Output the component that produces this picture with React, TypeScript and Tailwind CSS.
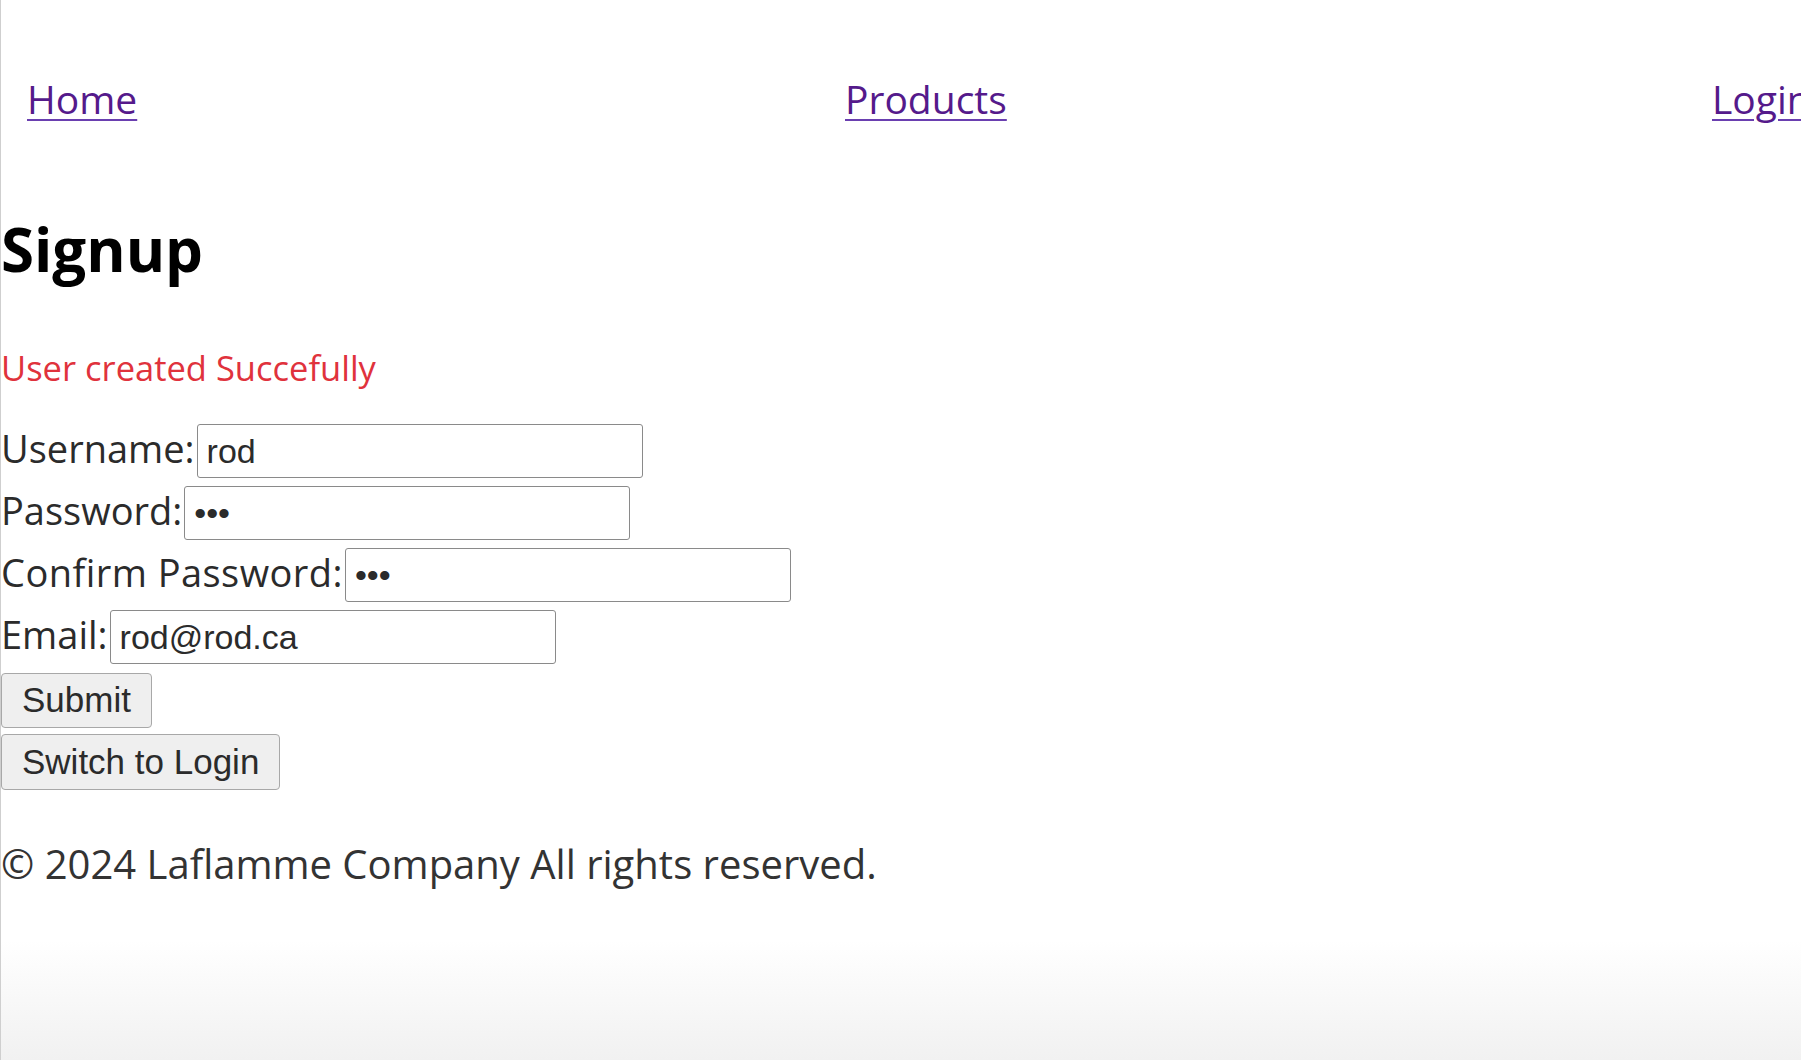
import React from "react";

const fields = [
  { label: "Username:", type: "text", value: "rod", extra: "" },
  { label: "Password:", type: "password", value: "rod", extra: "" },
  { label: "Confirm Password:", type: "password", value: "rod", extra: "tracking-[0.45px]" },
  { label: "Email:", type: "email", value: "rod@rod.ca", extra: "" },
];

export default function App() {
  return (
    <div className="min-h-[1060px] w-full overflow-hidden border-l border-[#cfcfcf] bg-[linear-gradient(to_bottom,#ffffff_940px,#f1f1f1_1060px)] font-['Open_Sans',sans-serif] text-[#2b2b2b]">
      <nav className="grid grid-cols-[818px_867px_1fr] pl-[26px] pt-[76px] text-[39px] leading-[1.2]">
        <a href="#" className="text-[#551a8b] underline decoration-[#6a3fb0] decoration-2 underline-offset-[5px]">
          Home
        </a>
        <a href="#" className="text-[#551a8b] underline decoration-[#6a3fb0] decoration-2 underline-offset-[5px]">
          Products
        </a>
        <a href="#" className="whitespace-nowrap text-[#551a8b] underline decoration-[#6a3fb0] decoration-2 underline-offset-[5px]">
          Login
        </a>
      </nav>

      <h1 className="mt-[90px] text-[60px] font-bold leading-[1.2] text-black">Signup</h1>

      <p className="mt-[62px] text-[34.5px] leading-[1.2] text-[#e0323c]">User created Succefully</p>

      <form className="mt-[36px] flex flex-col gap-2" onSubmit={(e) => e.preventDefault()}>
        {fields.map((f) => (
          <div key={f.label} className="flex items-baseline">
            <label className={`text-[38px] leading-[1.2] text-[#2b2b2b] ${f.extra}`}>{f.label}</label>
            <input
              type={f.type}
              defaultValue={f.value}
              className="ml-[2px] h-[54px] w-[446px] rounded-[3px] border-[1.5px] border-[#8a8a8a] bg-white px-[9px] font-['Liberation_Sans',Arial,sans-serif] text-[34px] text-[#2b2b2b] outline-none"
            />
          </div>
        ))}
        <div className="mt-px flex flex-col items-start gap-[6px]">
          <button
            type="submit"
            className="h-[55px] rounded-[4px] border-[1.5px] border-[#a8a8a8] bg-[#efefef] px-[20px] font-['Liberation_Sans',Arial,sans-serif] text-[35px] text-[#2b2b2b]"
          >
            Submit
          </button>
          <button
            type="button"
            className="h-[56px] rounded-[4px] border-[1.5px] border-[#a8a8a8] bg-[#efefef] px-[20px] font-['Liberation_Sans',Arial,sans-serif] text-[35px] text-[#2b2b2b]"
          >
            Switch to Login
          </button>
        </div>
      </form>

      <footer className="mt-[50px] text-[40px] leading-[1.2] text-[#333333]">
        © 2024 Laflamme Company All rights reserved.
      </footer>
    </div>
  );
}
